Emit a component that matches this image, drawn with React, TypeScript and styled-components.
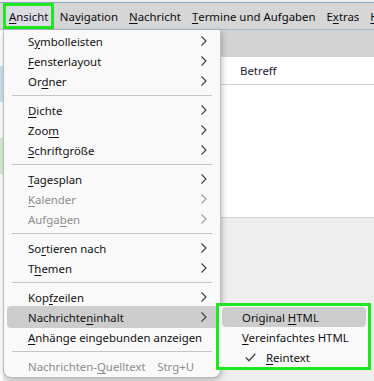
import React from 'react';
import styled, { createGlobalStyle } from 'styled-components';

const GlobalStyle = createGlobalStyle`
  body {
    margin: 0;
    font-family: 'Noto Sans', 'Open Sans', sans-serif;
    font-size: 11.2px;
    color: #111;
  }
`;

type Item =
  | { kind: 'sep' }
  | { kind: 'item'; label: string; key: number; sub?: boolean; disabled?: boolean; active?: boolean; shortcut?: string };

const menuItems: Item[] = [
  { kind: 'item', label: 'Symbolleisten', key: 1, sub: true },
  { kind: 'item', label: 'Fensterlayout', key: 0, sub: true },
  { kind: 'item', label: 'Ordner', key: 2, sub: true },
  { kind: 'sep' },
  { kind: 'item', label: 'Dichte', key: 0, sub: true },
  { kind: 'item', label: 'Zoom', key: 3, sub: true },
  { kind: 'item', label: 'Schriftgröße', key: 0, sub: true },
  { kind: 'sep' },
  { kind: 'item', label: 'Tagesplan', key: 0, sub: true },
  { kind: 'item', label: 'Kalender', key: 0, sub: true, disabled: true },
  { kind: 'item', label: 'Aufgaben', key: 5, sub: true, disabled: true },
  { kind: 'sep' },
  { kind: 'item', label: 'Sortieren nach', key: 2, sub: true },
  { kind: 'item', label: 'Themen', key: 1, sub: true },
  { kind: 'sep' },
  { kind: 'item', label: 'Kopfzeilen', key: 3, sub: true },
  { kind: 'item', label: 'Nachrichteninhalt', key: 10, sub: true, active: true },
  { kind: 'item', label: 'Anhänge eingebunden anzeigen', key: 0 },
  { kind: 'sep' },
  { kind: 'item', label: 'Nachrichten-Quelltext', key: 12, disabled: true, shortcut: 'Strg+U' },
];

const barItems = [
  { label: 'Ansicht', key: 0 },
  { label: 'Navigation', key: 2 },
  { label: 'Nachricht', key: 0 },
  { label: 'Termine und Aufgaben', key: 0 },
  { label: 'Extras', key: 1 },
  { label: 'Hilfe', key: 0 },
];

const subItems = [
  { label: 'Original HTML', key: 9, active: true },
  { label: 'Vereinfachtes HTML', key: 0 },
  { label: 'Reintext', key: 0, checked: true },
];

const Access = ({ text, at }: { text: string; at: number }) => (
  <>
    {text.slice(0, at)}
    <U>{text[at]}</U>
    {text.slice(at + 1)}
  </>
);

const Chevron = ({ color }: { color: string }) => (
  <svg width="6" height="10" viewBox="0 0 6 10">
    <polyline points="0.5,0.5 5,5 0.5,9.5" fill="none" stroke={color} strokeWidth="1.1" />
  </svg>
);

const Check = () => (
  <svg width="11" height="9" viewBox="0 0 11 9">
    <polyline points="0.8,4.5 4,7.7 10.3,0.8" fill="none" stroke="#444" strokeWidth="1.3" />
  </svg>
);

export default function App() {
  return (
    <Screen>
      <GlobalStyle />
      <MenuBar>
        {barItems.map((b, i) => (
          <BarItem key={b.label} $open={i === 0}>
            <Access text={b.label} at={b.key} />
          </BarItem>
        ))}
      </MenuBar>
      <Workspace>
        <LeftPane>
          <LeftCell $bg="#ffffff" />
          <LeftCell $bg="#cde3f5" />
          <LeftCell $bg="#ffffff" />
          <LeftCell $bg="#d9eed6" />
          <LeftCell $bg="#ffffff" $grow />
        </LeftPane>
        <MainPane>
          <ToolBand />
          <HeaderRow>
            <HeaderCell>Betreff</HeaderCell>
          </HeaderRow>
          <ListArea />
          <PreviewArea />
        </MainPane>
      </Workspace>

      <Popup>
        {menuItems.map((m, i) =>
          m.kind === 'sep' ? (
            <Separator key={i} />
          ) : (
            <Row key={i} $active={m.active} $disabled={m.disabled}>
              <Label>
                <Access text={m.label} at={m.key} />
              </Label>
              {m.shortcut && <Shortcut>{m.shortcut}</Shortcut>}
              {m.sub && (
                <Arrow>
                  <Chevron color={m.disabled ? '#9a9a9a' : '#3a3a3a'} />
                </Arrow>
              )}
            </Row>
          )
        )}
      </Popup>

      <SubFrame>
        <SubPopup>
          {subItems.map((s) => (
            <SubRow key={s.label} $active={s.active}>
              <CheckSlot>{s.checked && <Check />}</CheckSlot>
              <SubLabel $indent={!!s.checked}>
                <Access text={s.label} at={s.key} />
              </SubLabel>
            </SubRow>
          ))}
        </SubPopup>
      </SubFrame>
    </Screen>
  );
}

const Screen = styled.div`
  position: relative;
  width: 374px;
  height: 381px;
  overflow: hidden;
  background: #eeeeee;
  display: flex;
  flex-direction: column;
`;

const U = styled.span`
  text-decoration: underline;
  text-underline-offset: 2px;
`;

const MenuBar = styled.div`
  height: 28px;
  margin-top: 2px;
  border-top: 1px solid #8aa9bf;
  border-bottom: 1px solid #a9bccb;
  background: #d6d6d6;
  display: flex;
  align-items: stretch;
  padding-left: 3px;
  white-space: nowrap;
  box-sizing: border-box;
`;

const BarItem = styled.div<{ $open?: boolean }>`
  display: flex;
  align-items: center;
  padding: 0 5.5px;
  font-size: 11.4px;
  color: #0c0c0c;
  box-sizing: border-box;
  ${(p) =>
    p.$open &&
    `
    border: 3px solid #1ee81e;
    padding: 0 3px;
    background: #dcdce4;
  `}
`;

const Workspace = styled.div`
  flex: 1;
  display: flex;
`;

const LeftPane = styled.div`
  width: 3px;
  display: flex;
  flex-direction: column;
`;

const LeftCell = styled.div<{ $bg: string; $grow?: boolean }>`
  background: ${(p) => p.$bg};
  height: 36px;
  ${(p) => p.$grow && 'flex: 1;'}
`;

const MainPane = styled.div`
  flex: 1;
  display: flex;
  flex-direction: column;
`;

const ToolBand = styled.div`
  height: 27px;
  background: #d3d3d3;
`;

const HeaderRow = styled.div`
  height: 27px;
  background: #fff;
  border-bottom: 1px solid #d2d2d2;
  display: flex;
  align-items: center;
  padding-left: 237px;
`;

const HeaderCell = styled.span`
  font-size: 11.4px;
  color: #1a1a2e;
`;

const ListArea = styled.div`
  height: 132px;
  background: #fff;
  border-bottom: 1px solid #d2d2d2;
`;

const PreviewArea = styled.div`
  flex: 1;
  background: #eeeeee;
`;

const Popup = styled.div`
  position: absolute;
  left: 3px;
  top: 30px;
  width: 218px;
  padding: 1px 0 1px;
  background: #f9f9f9;
  border: 1px solid #bdbdbd;
  border-top: none;
  border-radius: 0 0 8px 8px;
  box-shadow: 1px 2px 6px rgba(0, 0, 0, 0.25);
  box-sizing: border-box;
`;

const Row = styled.div<{ $active?: boolean; $disabled?: boolean }>`
  height: 20px;
  margin: 0 0 0 3px;
  padding: 0 13px 0 21px;
  display: flex;
  align-items: center;
  border-radius: 4px;
  font-size: 11.4px;
  color: ${(p) => (p.$disabled ? '#8c8c8c' : '#111')};
  background: ${(p) => (p.$active ? '#cdcdcd' : 'transparent')};
  ${(p) => p.$active && 'height: 22px; margin-top: -1px; margin-bottom: -1px;'}
`;

const Label = styled.span`
  flex: 1;
  white-space: nowrap;
`;

const Shortcut = styled.span`
  margin-right: 13px;
`;

const Arrow = styled.span`
  display: flex;
  align-items: center;
`;

const Separator = styled.div`
  height: 1px;
  margin: 4px 8px 4px 8px;
  background: #c6c6c6;
`;

const SubFrame = styled.div`
  position: absolute;
  left: 216px;
  top: 303px;
  width: 155px;
  height: 67px;
  border: 3px solid #1ee81e;
  box-sizing: border-box;
  background: #f9f9f9;
`;

const SubPopup = styled.div`
  padding: 1px 2px 0 3px;
`;

const SubRow = styled.div<{ $active?: boolean }>`
  height: 20px;
  display: flex;
  align-items: center;
  border-radius: 4px;
  font-size: 11.4px;
  color: #111;
  background: ${(p) => (p.$active ? '#cdcdcd' : 'transparent')};
`;

const CheckSlot = styled.span`
  width: 34px;
  display: flex;
  justify-content: flex-end;
`;

const SubLabel = styled.span<{ $indent: boolean }>`
  margin-left: ${(p) => (p.$indent ? '10px' : '-14px')};
  white-space: nowrap;
`;
